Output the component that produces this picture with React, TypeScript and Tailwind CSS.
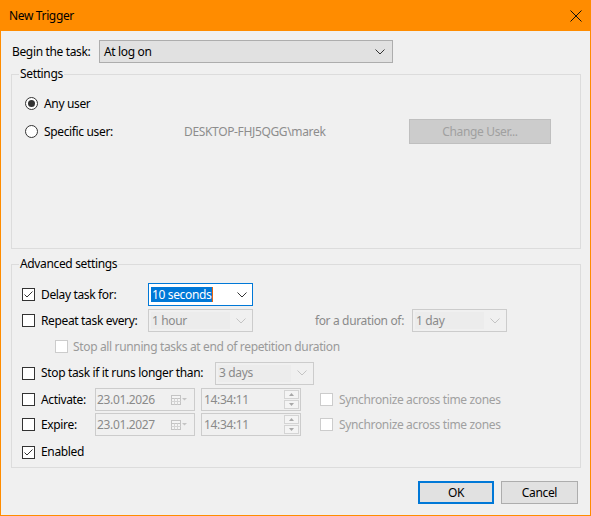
import React from "react";

function Chevron({ color = "#333333" }: { color?: string }) {
  return (
    <svg width="10" height="6" viewBox="0 0 10 6" className="shrink-0">
      <polyline points="0.5,0.5 5,5 9.5,0.5" fill="none" stroke={color} strokeWidth="1" />
    </svg>
  );
}

function CheckBox({ checked = false, disabled = false }: { checked?: boolean; disabled?: boolean }) {
  return (
    <div
      className={
        "relative w-[13px] h-[13px] shrink-0 border bg-white " +
        (disabled ? "border-[#cccccc]" : "border-[#333333]")
      }
    >
      {checked && (
        <svg width="11" height="11" viewBox="0 0 11 11" className="absolute left-0 top-0">
          <polyline points="1.5,5.5 4,8 9.5,2.5" fill="none" stroke="#333333" strokeWidth="1" />
        </svg>
      )}
    </div>
  );
}

function Radio({ selected = false }: { selected?: boolean }) {
  return (
    <div className="w-[13px] h-[13px] shrink-0 rounded-full border border-[#333333] bg-white flex items-center justify-center">
      {selected && <div className="w-[7px] h-[7px] rounded-full bg-[#333333]" />}
    </div>
  );
}

function DisabledCombo({ value, width }: { value: string; width: string }) {
  return (
    <div className={"h-[23px] shrink-0 border border-[#cccccc] bg-[#f0f0f0] flex items-center pl-[2px] pr-[6px] " + width}>
      <div className="flex-1 h-[17px] bg-[#ececec] flex items-center pl-[1px] text-[#8a8a8a] mr-[6px]">{value}</div>
      <Chevron color="#c4c4c4" />
    </div>
  );
}

function CalendarIcon() {
  return (
    <svg width="16" height="10" viewBox="0 0 16 10" className="shrink-0">
      <rect x="0.5" y="0.5" width="9" height="9" fill="#f4f4f4" stroke="#c4c4c4" />
      <line x1="0.5" y1="3.5" x2="9.5" y2="3.5" stroke="#c4c4c4" />
      <line x1="0.5" y1="6.5" x2="9.5" y2="6.5" stroke="#d4d4d4" />
      <line x1="3.5" y1="3.5" x2="3.5" y2="9.5" stroke="#d4d4d4" />
      <line x1="6.5" y1="3.5" x2="6.5" y2="9.5" stroke="#d4d4d4" />
      <polygon points="11,3 16,3 13.5,5.5" fill="#c4c4c4" />
    </svg>
  );
}

function DateBox({ value }: { value: string }) {
  return (
    <div className="w-[100px] h-[23px] shrink-0 border border-[#cccccc] bg-[#f0f0f0] flex items-center pl-[1px] pr-[7px] justify-between">
      <span className="text-[#8a8a8a]">{value}</span>
      <CalendarIcon />
    </div>
  );
}

function TimeBox({ value }: { value: string }) {
  return (
    <div className="w-[100px] h-[23px] shrink-0 border border-[#cccccc] bg-[#f0f0f0] flex items-center pl-[2px] pr-[1px] justify-between">
      <span className="text-[#8a8a8a]">{value}</span>
      <div className="flex flex-col gap-[1px]">
        <div className="w-[15px] h-[9px] border border-[#d4d4d4] bg-[#f4f4f4] flex items-center justify-center">
          <svg width="5" height="3" viewBox="0 0 5 3">
            <polygon points="0,3 5,3 2.5,0" fill="#a8a8a8" />
          </svg>
        </div>
        <div className="w-[15px] h-[9px] border border-[#d4d4d4] bg-[#f4f4f4] flex items-center justify-center">
          <svg width="5" height="3" viewBox="0 0 5 3">
            <polygon points="0,0 5,0 2.5,3" fill="#a8a8a8" />
          </svg>
        </div>
      </div>
    </div>
  );
}

function GroupBox({
  title,
  height,
  children,
}: {
  title: string;
  height: string;
  children: React.ReactNode;
}) {
  return (
    <div className={"relative ml-[10px] w-[570px] border border-[#dcdcdc] " + height}>
      <span className="absolute left-[7px] -top-[9px] px-[1px] bg-[#f0f0f0] leading-[16px] text-black">
        {title}
      </span>
      {children}
    </div>
  );
}

export default function App() {
  return (
    <div className="w-[591px] h-[516px] bg-[#ff8c00] flex flex-col font-['Noto_Sans',sans-serif] text-[12px] leading-[16px] tracking-[-0.35px] text-black select-none">
      {/* caption bar */}
      <div className="h-[31px] shrink-0 flex items-center justify-between pl-[9px] pr-[9px]">
        <span className="text-[12px] text-black">New Trigger</span>
        <svg width="12" height="12" viewBox="0 0 12 12">
          <line x1="0.5" y1="0.5" x2="11.5" y2="11.5" stroke="#111111" strokeWidth="1" />
          <line x1="11.5" y1="0.5" x2="0.5" y2="11.5" stroke="#111111" strokeWidth="1" />
        </svg>
      </div>

      {/* client area */}
      <div className="flex-1 mx-[1px] mb-[1px] bg-[#f0f0f0] flex flex-col pt-[9px]">
        <div className="flex items-center h-[23px]">
          <span className="ml-[11px] w-[87px]">Begin the task:</span>
          <div className="w-[294px] h-[23px] border border-[#adadad] bg-[#e1e1e1] flex items-center justify-between pl-[4px] pr-[7px]">
            <span>At log on</span>
            <Chevron />
          </div>
        </div>

        <div className="mt-[11px]">
          <GroupBox title="Settings" height="h-[175px]">
            <div className="flex flex-col pl-[13px] pt-[22px]">
              <div className="flex items-center h-[13px] gap-[6px]">
                <Radio selected />
                <span>Any user</span>
              </div>
              <div className="flex items-center h-[25px] mt-[9px]">
                <Radio />
                <span className="ml-[6px] w-[140px]">Specific user:</span>
                <span className="text-[#8d8d8d] w-[225px]">DESKTOP-FHJ5QGG\marek</span>
                <div className="w-[142px] h-[25px] border border-[#bfbfbf] bg-[#cccccc] flex items-center justify-center text-[#a0a0a0]">
                  Change User...
                </div>
              </div>
            </div>
          </GroupBox>
        </div>

        <div className="mt-[15px]">
          <GroupBox title="Advanced settings" height="h-[204px]">
            <div className="flex flex-col pl-[10px] pt-[18px]">
              {/* delay */}
              <div className="flex items-center h-[23px]">
                <CheckBox checked />
                <span className="ml-[6px] w-[107px]">Delay task for:</span>
                <div className="w-[105px] h-[23px] border border-[#0078d7] bg-white flex items-center justify-between pl-[2px] pr-[5px]">
                  <span className="flex items-center">
                    <span className="bg-[#0078d7] text-white h-[15px] leading-[15px] pl-[1px] pr-[1px]">10 seconds</span>
                    <span className="w-[1px] h-[15px] bg-[#e8640c]" />
                  </span>
                  <Chevron />
                </div>
              </div>

              {/* repeat */}
              <div className="flex items-center h-[23px] mt-[3px]">
                <CheckBox />
                <span className="ml-[6px] w-[107px]">Repeat task every:</span>
                <DisabledCombo value="1 hour" width="w-[105px]" />
                <span className="w-[159px] text-right pr-[8px] text-[#8a8a8a]">for a duration of:</span>
                <DisabledCombo value="1 day" width="w-[95px]" />
              </div>

              {/* stop all */}
              <div className="flex items-center h-[21px] mt-[4px] pl-[33px]">
                <CheckBox disabled />
                <span className="ml-[5px] text-[#9a9a9a]">Stop all running tasks at end of repetition duration</span>
              </div>

              {/* stop if longer */}
              <div className="flex items-center h-[22px] mt-[5px]">
                <CheckBox />
                <span className="ml-[6px] w-[174px]">Stop task if it runs longer than:</span>
                <DisabledCombo value="3 days" width="w-[99px]" />
              </div>

              {/* activate */}
              <div className="flex items-center h-[23px] mt-[4px]">
                <CheckBox />
                <span className="ml-[6px] w-[54px]">Activate:</span>
                <DateBox value="23.01.2026" />
                <div className="ml-[6px]">
                  <TimeBox value="14:34:11" />
                </div>
                <div className="ml-[19px]">
                  <CheckBox disabled />
                </div>
                <span className="ml-[6px] text-[#a0a0a0]">Synchronize across time zones</span>
              </div>

              {/* expire */}
              <div className="flex items-center h-[23px] mt-[2px]">
                <CheckBox />
                <span className="ml-[6px] w-[54px]">Expire:</span>
                <DateBox value="23.01.2027" />
                <div className="ml-[6px]">
                  <TimeBox value="14:34:11" />
                </div>
                <div className="ml-[19px]">
                  <CheckBox disabled />
                </div>
                <span className="ml-[6px] text-[#a0a0a0]">Synchronize across time zones</span>
              </div>

              {/* enabled */}
              <div className="flex items-center h-[22px] mt-[5px]">
                <CheckBox checked />
                <span className="ml-[6px]">Enabled</span>
              </div>
            </div>
          </GroupBox>
        </div>

        <div className="mt-[13px] flex justify-end gap-[7px] pr-[12px]">
          <div className="w-[76px] h-[23px] border-2 border-[#0078d7] bg-[#e1e1e1] flex items-center justify-center">
            OK
          </div>
          <div className="w-[77px] h-[23px] border border-[#adadad] bg-[#e1e1e1] flex items-center justify-center">
            Cancel
          </div>
        </div>
      </div>
    </div>
  );
}
